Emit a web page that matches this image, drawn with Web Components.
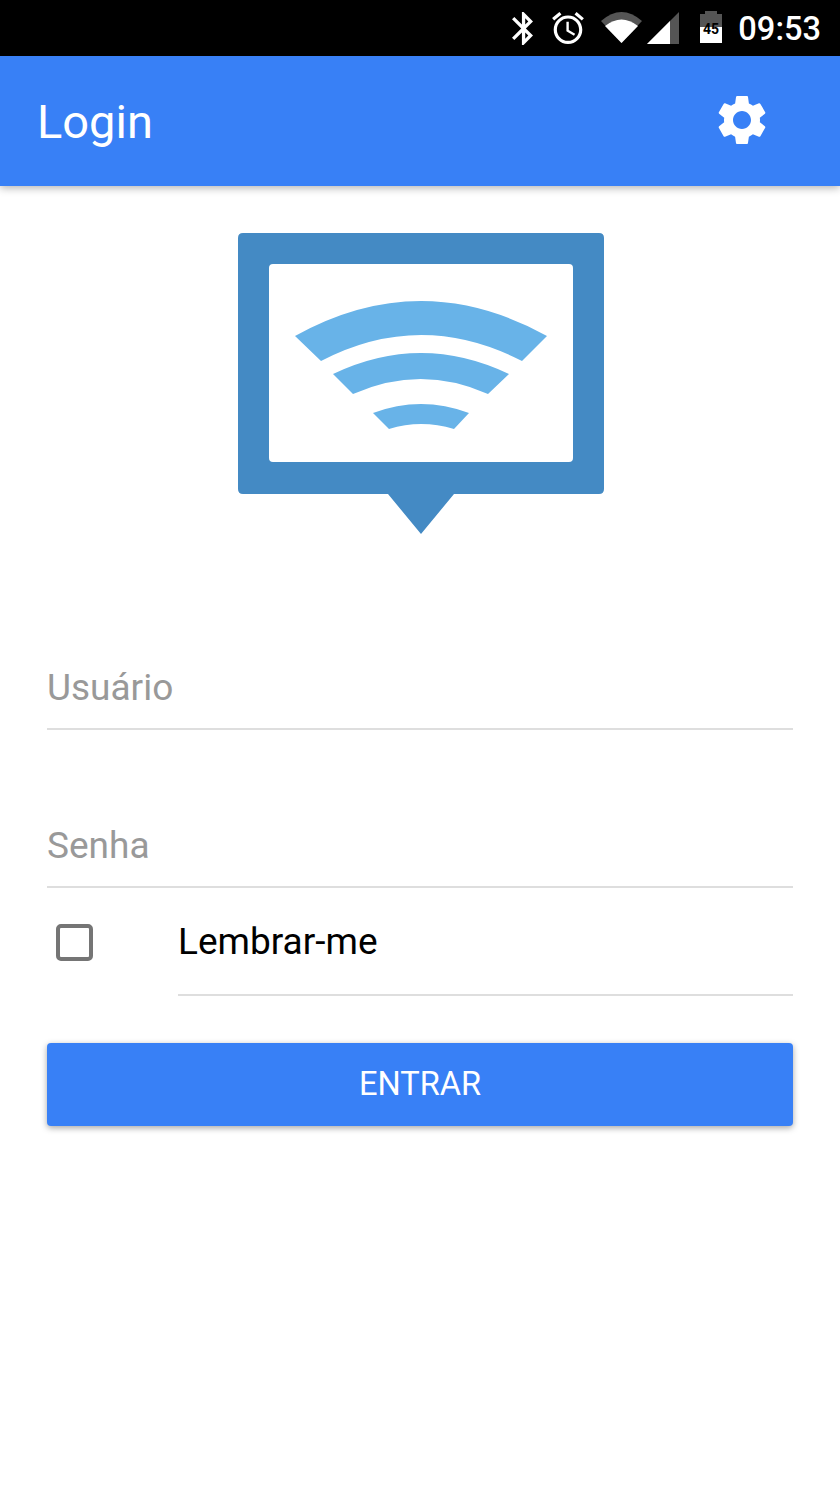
<!DOCTYPE html>
<html lang="pt">
<head>
<meta charset="utf-8">
<title>Login</title>
<style>
    html, body { margin: 0; background: #fff; }
    body { font-family: Roboto, "Noto Sans", sans-serif; }
</style>
</head>
<body>
<status-bar time="09:53"></status-bar>
<app-bar>Login</app-bar>
<login-page>
    <wifi-logo></wifi-logo>
    <text-field placeholder="Usuário"></text-field>
    <text-field placeholder="Senha"></text-field>
    <remember-row>Lembrar-me</remember-row>
    <primary-button>ENTRAR</primary-button>
</login-page>

<script>
class StatusBar extends HTMLElement {
    connectedCallback() {
        this.attachShadow({mode: 'open'})
        this.shadowRoot.innerHTML = `
            <style>
                :host { display: flex; justify-content: flex-end; align-items: flex-start; height: 56px; background: #000; color: #fff; padding-right: 19px; box-sizing: border-box; }
                svg { display: block; fill: #fff; margin-top: 12px; }
                .dim { fill: #555; }
                .bt { margin-right: 19px; }
                .alarm { margin-right: 17px; }
                .wifi { margin-right: 5px; }
                .signal { margin-right: 21px; }
                .battery { margin-top: 11px; margin-right: 16px; }
                .time { font: 500 32.6px/58px Roboto, sans-serif; }
            </style>
            <svg class="bt" width="21" height="33" viewBox="5 2 12.71 20"><path d="M17.71 7.71L12 2h-1v7.59L6.41 5 5 6.41 10.59 12 5 17.59 6.41 19 11 14.41V22h1l5.71-5.71-4.3-4.29 4.3-4.29zM13 5.83l1.88 1.88L13 9.59V5.83zm1.88 10.46L13 18.17v-3.76l1.88 1.88z"/></svg>
            <svg class="alarm" width="32" height="32" viewBox="2 1.86 20 20.14"><path d="M22 5.72l-4.6-3.86-1.29 1.53 4.6 3.86L22 5.72zM7.88 3.39L6.6 1.86 2 5.71l1.29 1.53 4.59-3.85zM12.5 8H11v6l4.75 2.85.75-1.23-4-2.37V8zM12 4c-4.97 0-9 4.03-9 9s4.03 9 9 9 9-4.03 9-9-4.03-9-9-9zm0 16c-3.87 0-7-3.13-7-7s3.13-7 7-7 7 3.13 7 7-3.13 7-7 7z"/></svg>
            <svg class="wifi" width="41" height="31" viewBox="0 0 41 31">
                <path class="dim" d="M0 9Q20.5 -9 41 9L20.5 31z"/>
                <path d="M4 14Q20.5 1 37 14L20.5 31z"/>
            </svg>
            <svg class="signal" width="32" height="32" viewBox="0 0 32 32">
                <path class="dim" d="M0 32L32 0V32z"/>
                <path d="M0 32L23 9V32z"/>
            </svg>
            <svg class="battery" width="22" height="32" viewBox="0 0 22 32">
                <path class="dim" d="M5 0H17V3H22V16H0V3H5z"/>
                <rect y="16" width="22" height="16"/>
                <text x="11" y="23" text-anchor="middle" font-family="Roboto, sans-serif" font-size="14" font-weight="700" fill="#000">45</text>
            </svg>
            <span class="time">${this.getAttribute('time')}</span>
        `
    }
}

const appBarTemplate = document.createElement('template')
appBarTemplate.innerHTML = `
    <style>
        :host { display: flex; align-items: center; justify-content: space-between; position: relative; z-index: 2; height: 130px; padding: 0 68px 0 37px; box-sizing: border-box; background: #3880f6; color: #fff; box-shadow: 0 2px 8px rgba(0,0,0,.3); }
        .title { font: 400 47px/1 Roboto, sans-serif; }
        svg { display: block; width: 60px; height: 60px; fill: #fff; margin-top: -2px; }
    </style>
    <div class="title"><slot></slot></div>
    <svg viewBox="0 0 24 24"><path d="M19.14,12.94c0.04-0.3,0.06-0.61,0.06-0.94c0-0.32-0.02-0.64-0.07-0.94l2.03-1.58c0.18-0.14,0.23-0.41,0.12-0.61l-1.92-3.32c-0.12-0.22-0.37-0.29-0.59-0.22l-2.39,0.96c-0.5-0.38-1.03-0.7-1.62-0.94L14.4,2.81c-0.04-0.24-0.24-0.41-0.48-0.41h-3.84c-0.24,0-0.43,0.17-0.47,0.41L9.25,5.35C8.66,5.59,8.12,5.92,7.63,6.29L5.24,5.33c-0.22-0.08-0.47,0-0.59,0.22L2.74,8.87C2.62,9.08,2.66,9.34,2.86,9.48l2.03,1.58C4.84,11.36,4.8,11.69,4.8,12s0.02,0.64,0.07,0.94l-2.03,1.58c-0.18,0.14-0.23,0.41-0.12,0.61l1.92,3.32c0.12,0.22,0.37,0.29,0.59,0.22l2.39-0.96c0.5,0.38,1.03,0.7,1.62,0.94l0.36,2.54c0.05,0.24,0.24,0.41,0.48,0.41h3.84c0.24,0,0.44-0.17,0.47-0.41l0.36-2.54c0.59-0.24,1.13-0.56,1.62-0.94l2.39,0.96c0.22,0.08,0.47,0,0.59-0.22l1.92-3.32c0.12-0.22,0.07-0.47-0.12-0.61L19.14,12.94z M12,15.6c-1.98,0-3.6-1.62-3.6-3.6s1.62-3.6,3.6-3.6s3.6,1.62,3.6,3.6S13.98,15.6,12,15.6z"/></svg>
`
class AppBar extends HTMLElement {
    constructor() {
        super()
        this.attachShadow({mode: 'open'})
        this.shadowRoot.appendChild(appBarTemplate.content.cloneNode(true))
    }
}

const loginPageTemplate = document.createElement('template')
loginPageTemplate.innerHTML = `
    <style>
        :host { display: flex; flex-direction: column; padding: 47px 47px 0; box-sizing: border-box; height: 1307px; }
    </style>
    <slot></slot>
`
class LoginPage extends HTMLElement {
    constructor() {
        super()
        this.attachShadow({mode: 'open'})
        this.shadowRoot.appendChild(loginPageTemplate.content.cloneNode(true))
    }
}

const wifiLogoTemplate = document.createElement('template')
wifiLogoTemplate.innerHTML = `
    <style>
        :host { display: flex; justify-content: center; padding-left: 2px; margin-bottom: 38px; }
        svg { display: block; filter: blur(.5px); }
    </style>
    <svg width="366" height="301" viewBox="238 233 366 301">
        <path fill="#448ac4" fill-rule="evenodd" d="M243 233H599Q604 233 604 238V489Q604 494 599 494H454L421 534L388 494H243Q238 494 238 489V238Q238 233 243 233z
            M273 264Q269 264 269 268V458Q269 462 273 462H569Q573 462 573 458V268Q573 264 569 264z"/>
        <g fill="#68b3e8">
            <path d="M295 336Q421 266 547 336L522 361Q421 309 321 361z"/>
            <path d="M333 374Q421 332 509 374L488 394Q421 364 353 394z"/>
            <path d="M373 413Q421 395 469 413L454 429Q421 419 389 429z"/>
        </g>
    </svg>
`
class WifiLogo extends HTMLElement {
    constructor() {
        super()
        this.attachShadow({mode: 'open'})
        this.shadowRoot.appendChild(wifiLogoTemplate.content.cloneNode(true))
    }
}

class TextField extends HTMLElement {
    connectedCallback() {
        this.attachShadow({mode: 'open'})
        this.shadowRoot.innerHTML = `
            <style>
                :host { display: flex; align-items: flex-end; height: 158px; }
                .input { flex: 1; height: 80px; box-sizing: border-box; border-bottom: 2px solid #dedede; font: 400 37px/76px Roboto, sans-serif; color: #999; }
            </style>
            <div class="input">${this.getAttribute('placeholder')}</div>
        `
    }
}

const rememberTemplate = document.createElement('template')
rememberTemplate.innerHTML = `
    <style>
        :host { display: flex; height: 108px; box-sizing: border-box; }
        .box-cell { width: 131px; padding: 36px 0 0 9px; box-sizing: border-box; flex: none; }
        .box { width: 37px; height: 37px; box-sizing: border-box; border: 4px solid #757575; border-radius: 5px; }
        .label { flex: 1; border-bottom: 2px solid #dedede; font: 400 37px/108px Roboto, sans-serif; color: #000; }
    </style>
    <div class="box-cell"><div class="box"></div></div>
    <div class="label"><slot></slot></div>
`
class RememberRow extends HTMLElement {
    constructor() {
        super()
        this.attachShadow({mode: 'open'})
        this.shadowRoot.appendChild(rememberTemplate.content.cloneNode(true))
    }
}

const buttonTemplate = document.createElement('template')
buttonTemplate.innerHTML = `
    <style>
        :host { display: flex; align-items: center; justify-content: center; height: 83px; margin-top: 47px; border-radius: 4px; background: #3880f6; color: #fff; font: 400 32.6px/1 Roboto, sans-serif; box-shadow: 0 2px 6px rgba(0,0,0,.35); }
    </style>
    <slot></slot>
`
class PrimaryButton extends HTMLElement {
    constructor() {
        super()
        this.attachShadow({mode: 'open'})
        this.shadowRoot.appendChild(buttonTemplate.content.cloneNode(true))
    }
}

window.customElements.define('status-bar', StatusBar)
window.customElements.define('app-bar', AppBar)
window.customElements.define('login-page', LoginPage)
window.customElements.define('wifi-logo', WifiLogo)
window.customElements.define('text-field', TextField)
window.customElements.define('remember-row', RememberRow)
window.customElements.define('primary-button', PrimaryButton)
</script>
</body>
</html>
